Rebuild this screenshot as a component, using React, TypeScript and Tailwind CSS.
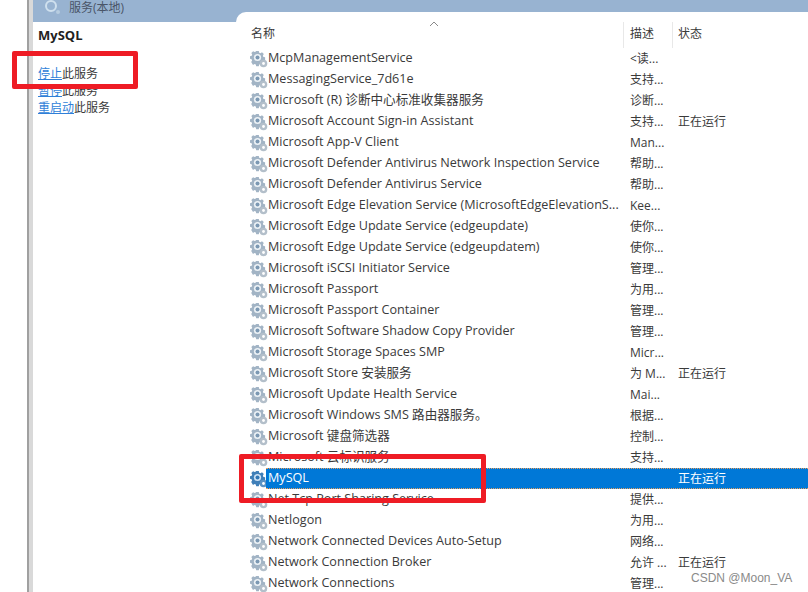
const rows = [
  { name: 'McpManagementService', desc: '<读...', status: '' },
  { name: 'MessagingService_7d61e', desc: '支持...', status: '' },
  { name: 'Microsoft (R) 诊断中心标准收集器服务', desc: '诊断...', status: '' },
  { name: 'Microsoft Account Sign-in Assistant', desc: '支持...', status: '正在运行' },
  { name: 'Microsoft App-V Client', desc: 'Man...', status: '' },
  { name: 'Microsoft Defender Antivirus Network Inspection Service', desc: '帮助...', status: '' },
  { name: 'Microsoft Defender Antivirus Service', desc: '帮助...', status: '' },
  { name: 'Microsoft Edge Elevation Service (MicrosoftEdgeElevationS...', desc: 'Kee...', status: '' },
  { name: 'Microsoft Edge Update Service (edgeupdate)', desc: '使你...', status: '' },
  { name: 'Microsoft Edge Update Service (edgeupdatem)', desc: '使你...', status: '' },
  { name: 'Microsoft iSCSI Initiator Service', desc: '管理...', status: '' },
  { name: 'Microsoft Passport', desc: '为用...', status: '' },
  { name: 'Microsoft Passport Container', desc: '管理...', status: '' },
  { name: 'Microsoft Software Shadow Copy Provider', desc: '管理...', status: '' },
  { name: 'Microsoft Storage Spaces SMP', desc: 'Micr...', status: '' },
  { name: 'Microsoft Store 安装服务', desc: '为 M...', status: '正在运行' },
  { name: 'Microsoft Update Health Service', desc: 'Mai...', status: '' },
  { name: 'Microsoft Windows SMS 路由器服务。', desc: '根据...', status: '' },
  { name: 'Microsoft 键盘筛选器', desc: '控制...', status: '' },
  { name: 'Microsoft 云标识服务', desc: '支持...', status: '' },
  { name: 'MySQL', desc: '', status: '正在运行', selected: true },
  { name: 'Net.Tcp Port Sharing Service', desc: '提供...', status: '' },
  { name: 'Netlogon', desc: '为用...', status: '' },
  { name: 'Network Connected Devices Auto-Setup', desc: '网络...', status: '' },
  { name: 'Network Connection Broker', desc: '允许 ...', status: '正在运行' },
  { name: 'Network Connections', desc: '管理...', status: '' },
];

const GearIcon = ({ selected }: { selected?: boolean }) => (
  <svg width="18" height="18" viewBox="0 0 18 18" className="shrink-0">
    <g fill={selected ? '#3f7fb8' : '#a2b4c5'}>
      <path d="M6.2 1h2.6l.4 1.7 1.3.5 1.5-.9 1.8 1.8-.9 1.5.5 1.3 1.7.4v2.6l-1.7.4-.5 1.3.9 1.5-1.8 1.8-1.5-.9-1.3.5-.4 1.7H6.2l-.4-1.7-1.3-.5-1.5.9L1.2 12l.9-1.5-.5-1.3L0 8.8V6.2l1.7-.4.5-1.3-.9-1.5L3.1 1.2l1.5.9 1.3-.5z" />
      <circle cx="13.5" cy="13.5" r="3.8" fill={selected ? '#5b93c4' : '#b3bfca'} />
    </g>
    <circle cx="7.5" cy="7.5" r="3.6" fill={selected ? '#cfe3f5' : '#eef3f7'} />
    <circle cx="7.5" cy="7.5" r="2" fill={selected ? '#2f76b5' : '#7b98b3'} />
    <circle cx="13.5" cy="13.5" r="1.4" fill="#ffffff" />
  </svg>
);

const App = () => {
  return (
    <div className="relative w-[808px] h-[592px] overflow-hidden bg-white flex font-['Open_Sans','Noto_Sans_CJK_SC',sans-serif] text-[12.6px] text-[#3a3a3a]">
      <div className="w-[27px] shrink-0 bg-white" />
      <div className="w-[2px] shrink-0 bg-[#a0a0a0]" />
      <div className="w-[4px] shrink-0 bg-[#d9d9d9]" />
      <div className="w-[203px] shrink-0 flex flex-col">
        <div className="h-[22px] shrink-0 bg-[#98b3d1] pl-[11px] flex items-start gap-[7px]">
          <svg width="18" height="16" viewBox="0 0 18 16" className="shrink-0">
            <circle cx="7" cy="6" r="5" fill="none" stroke="#cfe0ee" strokeWidth="2" />
            <circle cx="14" cy="12" r="2" fill="#b7cde0" />
          </svg>
          <span className="text-xs leading-[16px] text-[#4a5568]">服务(本地)</span>
        </div>
        <div className="pl-[5px] pt-[4px]">
          <h2 className="font-bold text-[13px] leading-[18px] text-[#222]">MySQL</h2>
          <div className="mt-[21px] leading-[17px] text-xs">
            <p><a className="text-[#2f7fd8] underline">停止</a>此服务</p>
            <p><a className="text-[#2f7fd8] underline">暂停</a>此服务</p>
            <p><a className="text-[#2f7fd8] underline">重启动</a>此服务</p>
          </div>
        </div>
      </div>
      <div className="flex-grow flex flex-col bg-[#98b3d1] pt-3">
        <div className="flex-grow flex flex-col bg-white rounded-tl-[10px]">
          <div className="h-[36px] shrink-0 flex pt-[10px] text-xs leading-[24px]">
            <div className="w-[387px] pl-[15px] relative">
              名称
              <svg width="10" height="6" viewBox="0 0 10 6" className="absolute left-[193px] top-[-1px]">
                <path d="M1 5l4-4 4 4" fill="none" stroke="#8a8a8a" strokeWidth="1" />
              </svg>
            </div>
            <div className="w-[49px] pl-[6px] border-l border-[#e8e8e8]">描述</div>
            <div className="flex-grow pl-[5px] border-l border-[#e8e8e8]">状态</div>
          </div>
          {rows.map((row) => (
            <div key={row.name} className="h-[21px] shrink-0 flex items-center whitespace-nowrap">
              <div className="w-[30px] pl-[14px] shrink-0">
                <GearIcon selected={row.selected} />
              </div>
              <div className={`flex-grow h-[21px] flex items-center ${row.selected ? 'bg-[#0078d7] text-white border-y border-dotted border-[#e8a060]' : ''}`}>
                <div className="w-[364px] shrink-0 pl-[2px] overflow-hidden">{row.name}</div>
                <div className="w-[48px] shrink-0 text-xs">{row.desc}</div>
                <div className="text-xs">{row.status}</div>
              </div>
            </div>
          ))}
        </div>
      </div>
      <div className="absolute left-[12px] top-[51px] w-[126px] h-[38px] border-[5px] border-[#ee1c25] rounded-[2px]" />
      <div className="absolute left-[239px] top-[454px] w-[247px] h-[49px] border-[5px] border-[#ee1c25] rounded-[2px]" />
      <div className="absolute left-[691px] top-[569px] text-xs leading-[18px] text-[#8a8a8a] font-['Liberation_Sans',sans-serif]">CSDN @Moon_VA</div>
    </div>
  );
};

export default App;
